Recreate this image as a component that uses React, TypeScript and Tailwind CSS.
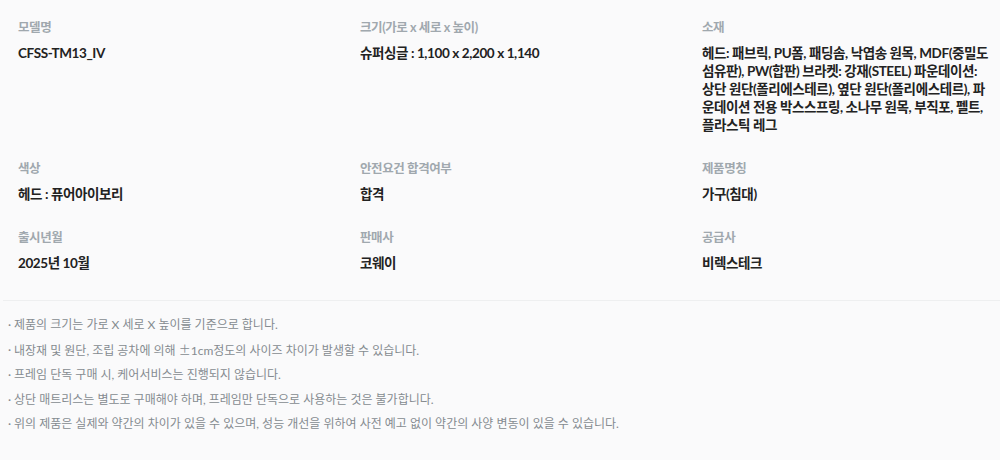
const material = [
  '헤드: 패브릭, PU폼, 패딩솜, 낙엽송 원목, MDF(중밀도',
  '섬유판), PW(합판) 브라켓: 강재(STEEL) 파운데이션:',
  '상단 원단(폴리에스테르), 옆단 원단(폴리에스테르), 파',
  '운데이션 전용 박스스프링, 소나무 원목, 부직포, 펠트,',
  '플라스틱 레그',
]

const specs = [
  { label: '모델명', value: 'CFSS-TM13_IV' },
  { label: '크기(가로 x 세로 x 높이)', value: '슈퍼싱글 : 1,100 x 2,200 x 1,140' },
  { label: '소재', lines: material },
  { label: '색상', value: '헤드 : 퓨어아이보리' },
  { label: '안전요건 합격여부', value: '합격' },
  { label: '제품명칭', value: '가구(침대)' },
  { label: '출시년월', value: '2025년 10월' },
  { label: '판매사', value: '코웨이' },
  { label: '공급사', value: '비렉스테크' },
]

const notes = [
  '제품의 크기는 가로 X 세로 X 높이를 기준으로 합니다.',
  <>
    내장재 및 원단, 조립 공차에 의해{' '}
    <span style={{ fontFamily: '"Noto Sans CJK KR", sans-serif' }}>±</span>1cm정도의 사이즈 차이가 발생할 수
    있습니다.
  </>,
  '프레임 단독 구매 시, 케어서비스는 진행되지 않습니다.',
  '상단 매트리스는 별도로 구매해야 하며, 프레임만 단독으로 사용하는 것은 불가합니다.',
  '위의 제품은 실제와 약간의 차이가 있을 수 있으며, 성능 개선을 위하여 사전 예고 없이 약간의 사양 변동이 있을 수 있습니다.',
]

export default function App() {
  return (
    <div
      className="w-[1000px] h-[460px] bg-[#fafafb] overflow-hidden"
      style={{ fontFamily: 'Lato, "Noto Sans CJK KR", sans-serif' }}
    >
      {/* Spec table */}
      <dl className="grid grid-cols-[342px_342px_1fr] gap-y-[26px] pl-[18px] pt-[19px] pb-[28px]">
        {specs.map((s) => (
          <div key={s.label} className="pr-[8px]">
            <dt className="text-[12.5px] leading-[18px] font-bold text-[#a0a8ae] tracking-[-0.4px]">
              {s.label}
            </dt>
            <dd className="mt-[7px] text-[13.5px] leading-[18px] font-bold text-[#222] tracking-[-0.4px]">
              {s.lines
                ? s.lines.map((l) => (
                    <span key={l} className="block whitespace-nowrap">
                      {l}
                    </span>
                  ))
                : s.value}
            </dd>
          </div>
        ))}
      </dl>

      <div className="ml-[3px] border-t border-[#eeeff0]" />

      {/* Notes */}
      <ul className="pt-[12px] pl-[8px]">
        {notes.map((n, i) => (
          <li key={i} className="flex text-[12px] leading-[24.5px] text-[#858b90]">
            <span className="w-[6px] shrink-0">·</span>
            <span>{n}</span>
          </li>
        ))}
      </ul>
    </div>
  )
}
